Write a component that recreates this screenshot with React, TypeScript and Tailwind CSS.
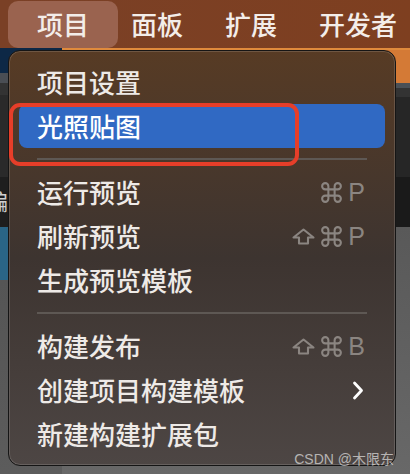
import { Command } from "lucide-react";

const CJK = "font-['Noto_Sans_CJK_SC','Noto_Sans',sans-serif]";

type Item =
	| { type: "sep" }
	| { type: "item"; label: string; shift?: boolean; key?: string; sub?: boolean; active?: boolean };

const ITEMS: Item[] = [
	{ type: "item", label: "项目设置" },
	{ type: "item", label: "光照贴图", active: true },
	{ type: "sep" },
	{ type: "item", label: "运行预览", key: "P" },
	{ type: "item", label: "刷新预览", shift: true, key: "P" },
	{ type: "item", label: "生成预览模板" },
	{ type: "sep" },
	{ type: "item", label: "构建发布", shift: true, key: "B" },
	{ type: "item", label: "创建项目构建模板", sub: true },
	{ type: "item", label: "新建构建扩展包" },
];

function Shortcut({ shift, k }: { shift?: boolean; k: string }) {
	return (
		<div className="flex items-center text-[#8b8581]">
			{shift && (
				<svg width="23" height="17" viewBox="0 0 23 17" fill="none" stroke="currentColor" strokeWidth="2.1" strokeLinejoin="round" className="mr-[4px]">
					<path d="M11.5 1.5 L21.5 9.5 H16 V15.5 H7 V9.5 H1.5 Z" />
				</svg>
			)}
			<Command size={25} strokeWidth={2} />
			<span className="ml-[4px] font-['Liberation_Sans',sans-serif] text-[25px] leading-none">{k}</span>
		</div>
	);
}

export default function App() {
	return (
		<div className={`relative w-[410px] h-[474px] overflow-hidden flex flex-col bg-[#5a5a5a] ${CJK}`}>
			{/* menubar */}
			<div className="h-[48px] flex items-center pl-[8px] bg-gradient-to-r from-[#7a4026] to-[#7e3f20] text-[#f3ede9] text-[26px] leading-none font-medium">
				<div className="h-[47px] px-[29px] flex items-center rounded-[10px] bg-[#9a634f]">项目</div>
				<div className="ml-[13px] flex items-center gap-[42px]">
					<span>面板</span>
					<span>扩展</span>
					<span>开发者</span>
				</div>
			</div>

			{/* app behind the menu */}
			<div className="flex-1 flex">
				<div className="w-[62px] flex flex-col">
					<div className="h-[25px] bg-[#0d2846]" />
					<div className="h-[10px] bg-[#4a4e54]" />
					<div className="h-[12px] bg-[#333333]" />
					<div className="h-[82px] bg-[#2a2a2a]" />
					<div className="h-[50px] bg-[#1e1e1e] text-[#cfcfcf] text-[22px] leading-[46px]">
						<span className="inline-block -ml-[14px]">编</span>
					</div>
					<div className="h-[53px] bg-[#2a6586]" />
					<div className="flex-1 bg-gradient-to-b from-[#555555] to-[#5c5c5c]" />
				</div>
				<div className="flex-1 flex flex-col">
					<div className="h-[2px] bg-[#e08a3c]" />
					<div className="h-[33px] bg-[#d47a36]" />
					<div className="h-[5px] bg-[#4a5056]" />
					<div className="h-[9px] bg-[#333333]" />
					<div className="h-[80px] bg-[#262626]" />
					<div className="h-[50px] bg-[#1a1a1a]" />
					<div className="flex-1 bg-gradient-to-b from-[#595959] to-[#686868]" />
				</div>
			</div>

			{/* dropdown */}
			<div className="absolute left-[8px] top-[50px] w-[388px] h-[416px] rounded-[12px] border border-[#151515] shadow-[inset_0_0_0_1px_rgba(255,255,255,0.14)] bg-gradient-to-b from-[#573b24] via-[#3d3430] to-[#4d4644] px-[10px] py-[9px] flex flex-col text-[#eeeae7] text-[26px] leading-none font-medium">
				{ITEMS.map((it, i) =>
					it.type === "sep" ? (
						<div key={i} className="h-[22px] flex items-center px-[18px]">
							<div className="w-full h-[2px] bg-[#5e5854]" />
						</div>
					) : (
						<div
							key={i}
							className={`h-[44px] flex items-center justify-between pl-[18px] pr-[20px] rounded-[8px] ${it.active ? "bg-[#3069c3] text-white" : ""}`}
						>
							<span>{it.label}</span>
							{it.key && <Shortcut shift={it.shift} k={it.key} />}
							{it.sub && (
								<svg width="12" height="19" viewBox="0 0 12 19" fill="none" stroke="white" strokeWidth="2.8" strokeLinecap="round" strokeLinejoin="round" className="mr-[1px]">
									<path d="M2.5 2 L9.5 9.5 L2.5 17" />
								</svg>
							)}
						</div>
					),
				)}
			</div>

			{/* annotation */}
			<div className="absolute left-[9px] top-[103px] w-[290px] h-[63px] rounded-[11px] border-[4px] border-[#e63e29]" />

			{/* watermark */}
			<div className="absolute right-[16px] bottom-[8px] text-[14px] leading-none text-white/60 font-['Liberation_Sans','Noto_Sans_CJK_SC',sans-serif]">
				CSDN @木限东
			</div>
		</div>
	);
}
